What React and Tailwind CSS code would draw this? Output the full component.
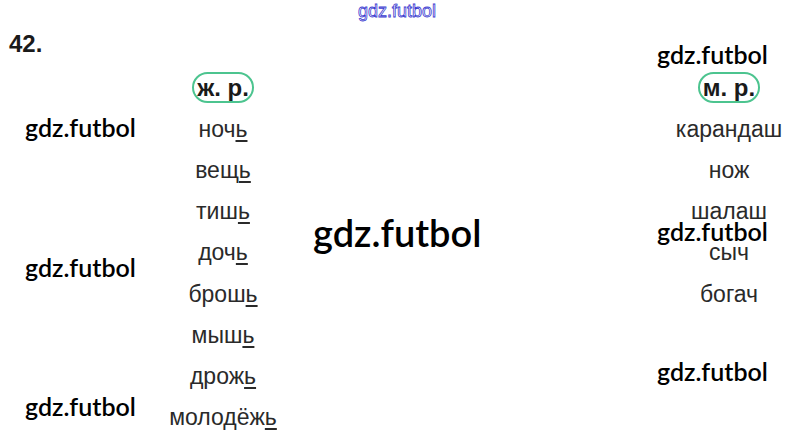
const leftWords = [
  ["ноч", "ь"],
  ["вещ", "ь"],
  ["тиш", "ь"],
  ["доч", "ь"],
  ["брош", "ь"],
  ["мыш", "ь"],
  ["дрож", "ь"],
  ["молодёж", "ь"],
]

const rightWords = ["карандаш", "нож", "шалаш", "сыч", "богач"]

function Tag({ children }) {
  return (
    <span className="inline-flex items-center h-[31px] px-[3px] rounded-full border-2 border-[#4cc48f] text-[24px] font-bold text-[#1a1a1a]">
      {children}
    </span>
  )
}

function Watermark({ className }) {
  return (
    <div className={"absolute font-['Lato',sans-serif] font-semibold text-black leading-none " + className}>
      gdz.futbol
    </div>
  )
}

export default function App() {
  return (
    <div className="relative w-[796px] h-[441px] overflow-hidden bg-white font-['Liberation_Sans',Arial,sans-serif] text-[#2a2a2a]">
      <div className="h-[67px] pt-[32px] pl-[9px] text-[24px] font-bold leading-none text-[#1a1a1a]">42.</div>
      <div className="flex text-[23px]">
        <div className="ml-[163px] w-[120px] flex flex-col">
          <div className="h-[41.25px] flex items-center justify-center">
            <Tag>ж. р.</Tag>
          </div>
          {leftWords.map(([stem, end]) => (
            <div key={stem} className="h-[41.25px] flex items-center justify-center">
              <span>
                {stem}
                <span className="underline decoration-2 underline-offset-[3px]">{end}</span>
              </span>
            </div>
          ))}
        </div>
        <div className="ml-[386px] w-[120px] flex flex-col">
          <div className="h-[41.25px] flex items-center justify-center">
            <Tag>м. р.</Tag>
          </div>
          {rightWords.map((w) => (
            <div key={w} className="h-[41.25px] flex items-center justify-center">
              {w}
            </div>
          ))}
        </div>
      </div>

      <div className="absolute left-[358px] top-[2px] text-[18px] leading-none font-['Liberation_Sans',sans-serif] text-transparent [-webkit-text-stroke:0.8px_#3b3bd0]">
        gdz.futbol
      </div>
      <Watermark className="left-[25px] top-[115px] text-[25px]" />
      <Watermark className="left-[25px] top-[255px] text-[25px]" />
      <Watermark className="left-[25px] top-[394px] text-[25px]" />
      <Watermark className="left-[657px] top-[42px] text-[25px]" />
      <Watermark className="left-[657px] top-[219px] text-[25px]" />
      <Watermark className="left-[657px] top-[359px] text-[25px]" />
      <Watermark className="left-[313px] top-[213px] text-[38px]" />
    </div>
  )
}
